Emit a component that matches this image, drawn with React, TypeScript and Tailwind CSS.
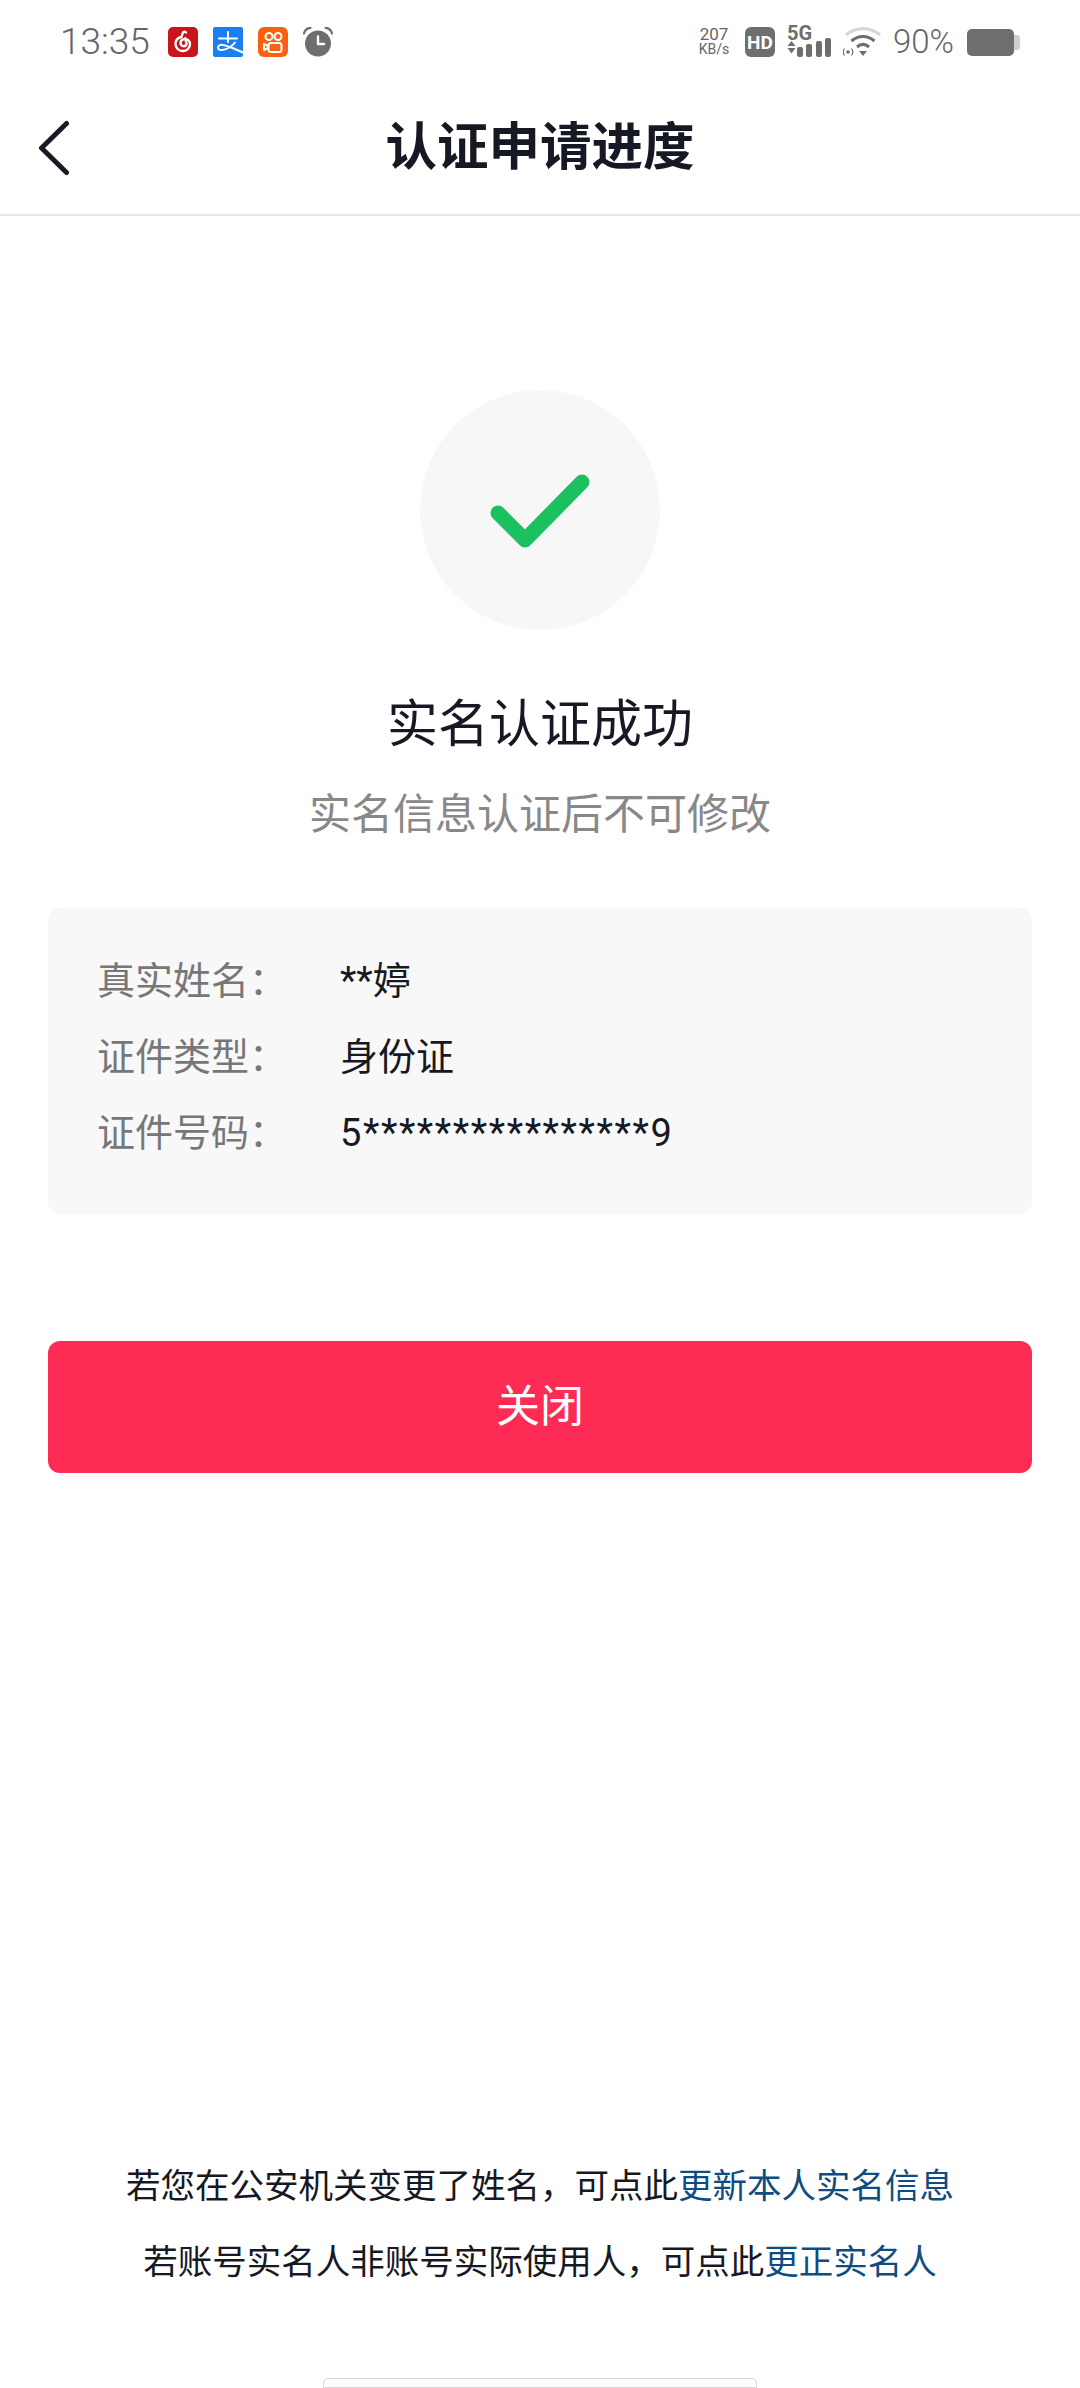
const font = "font-['Roboto','Noto_Sans_CJK_SC',sans-serif]";

function NeteaseIcon() {
    return (
        <svg width="30" height="30" viewBox="0 0 30 30" fill="none">
            <rect width="30" height="30" rx="5" fill="#c8141b" />
            <path d="M18 5.500c-1.200-1.300-3-.8-3.400.8L13.500 10c-3.800.8-6 3.600-6 7 0 4 3.200 7 7.200 7 4 0 7.300-3 7.300-6.800 0-3-2.400-5.200-5.200-5.200-2.500 0-4.300 1.800-4.300 4 0 1.800 1.400 3.200 3.100 3.200 1.700 0 2.900-1.300 2.900-3l-1.300-5" stroke="#fff" strokeWidth="2.400" strokeLinecap="round" strokeLinejoin="round" />
        </svg>
    );
}

function AlipayIcon() {
    return (
        <svg width="30" height="30" viewBox="0 0 30 30" fill="none">
            <rect width="30" height="30" rx="2" fill="#1a7ff0" />
            <path d="M6 11.500h18M15 5v10M22 15.500c-3 4-9 7.500-13 7.500-3 0-4-1.500-4-2.500 0-2 2.500-3 5-2.500 5 .7 12 4 20 7.500" stroke="#fff" strokeWidth="2" strokeLinecap="round" />
        </svg>
    );
}

function KuaishouIcon() {
    return (
        <svg width="30" height="30" viewBox="0 0 30 30" fill="none">
            <rect width="30" height="30" rx="6" fill="#f9600f" />
            <circle cx="11" cy="9.500" r="3.500" stroke="#fff" strokeWidth="2" />
            <circle cx="20" cy="9.500" r="3.500" stroke="#fff" strokeWidth="2" />
            <rect x="10.500" y="16" width="13" height="9" rx="2.500" stroke="#fff" strokeWidth="2" />
            <path d="M10 19l-4-2v6l4-2" stroke="#fff" strokeWidth="2" strokeLinejoin="round" />
        </svg>
    );
}

function AlarmIcon() {
    return (
        <svg width="30" height="30" viewBox="0 0 30 30" fill="none">
            <circle cx="15" cy="16.500" r="13" fill="#6e6e6e" />
            <path d="M1 6.500C2 2.500 5 1 7.500.8M29 6.500C28 2.500 25 1 22.500.8" stroke="#6e6e6e" strokeWidth="2.200" strokeLinecap="round" />
            <path d="M15 9.500v7.500h6" stroke="#fff" strokeWidth="2.400" strokeLinecap="round" strokeLinejoin="round" />
        </svg>
    );
}

function SignalIcon() {
    return (
        <svg width="46" height="30" viewBox="0 0 46 30" fill="#6e6e6e">
            <path d="M4.500 14l4 5h-8zM.5 21h8l-4 5.500z" />
            <rect x="10" y="20" width="6" height="10" rx="2" />
            <rect x="19" y="17" width="6" height="13" rx="2" />
            <rect x="29" y="14" width="6" height="16" rx="2" />
            <rect x="38" y="11" width="6" height="19" rx="2" />
        </svg>
    );
}

function WifiIcon() {
    return (
        <svg width="40" height="30" viewBox="0 0 40 30" fill="none">
            <path d="M3 8C13-.5 27-.5 37 8" stroke="#d6d6d6" strokeWidth="3.200" />
            <path d="M8.500 14c7-6 16-6 23 0" stroke="#6e6e6e" strokeWidth="3.200" />
            <path d="M14 20c4-3.500 8-3.500 12 0" stroke="#6e6e6e" strokeWidth="3.200" />
            <path d="M16 24h8l-4 5z" fill="#6e6e6e" />
            <circle cx="5" cy="25" r="1.800" fill="#6e6e6e" />
            <path d="M1.500 21.500c-1.500 2-1.500 5 0 7M8.500 21.500c1.500 2 1.500 5 0 7" stroke="#6e6e6e" strokeWidth="1.200" />
        </svg>
    );
}

function StatusBar() {
    return (
        <div className="flex h-[84px] items-start justify-between pt-[27px] pl-[60px] pr-[60px]">
            <div className="flex items-center">
                <span className="w-[108px] text-[37px] leading-[30px] font-light text-[#666]">13:35</span>
                <div className="flex gap-[15px]">
                    <NeteaseIcon />
                    <AlipayIcon />
                    <KuaishouIcon />
                    <AlarmIcon />
                </div>
            </div>
            <div className="flex items-center">
                <div className="flex w-[34px] flex-col items-center text-[#666]">
                    <span className="text-[17px] leading-[15px]">207</span>
                    <span className="text-[14px] leading-[15px]">KB/s</span>
                </div>
                <span className="ml-[14px] flex h-[30px] w-[30px] items-center justify-center rounded-[6px] bg-[#6e6e6e] text-[19px] leading-none font-bold text-white">HD</span>
                <div className="relative ml-[12px] h-[30px] w-[46px]">
                    <SignalIcon />
                    <span className="absolute top-[-3px] left-0 text-[20px] leading-[19px] font-bold text-[#6e6e6e]">5G</span>
                </div>
                <div className="ml-[10px]">
                    <WifiIcon />
                </div>
                <span className="ml-[10px] w-[64px] text-[33px] leading-[30px] font-light text-[#666]">90%</span>
                <div className="ml-[10px] flex h-[27px] items-center">
                    <div className="h-[27px] w-[47px] rounded-[5px] bg-[#6e6e6e]" />
                    <div className="h-[15px] w-[6px] rounded-r-[3px] bg-[#cfcfcf]" />
                </div>
            </div>
        </div>
    );
}

function NavBar() {
    return (
        <div className="flex h-[132px] items-center border-b-2 border-[#e8e8e8] pb-[2px]">
            <div className="w-[120px] pl-[38px]">
                <svg width="32" height="56" viewBox="0 0 32 56" fill="none">
                    <path d="M28.500 3.500L3.500 28l25 24.500" stroke="#1b1b26" strokeWidth="5" strokeLinecap="round" strokeLinejoin="round" />
                </svg>
            </div>
            <h1 className="flex-1 text-center text-[51.500px] leading-[60px] font-bold text-[#161823]">认证申请进度</h1>
            <div className="w-[120px]" />
        </div>
    );
}

function InfoRow({ label, value, valueClass }: { label: string; value: string; valueClass?: string }) {
    return (
        <div className="flex h-[76px] text-[38px] leading-[76px]">
            <span className="w-[243px] text-[#777]">{label}</span>
            <span className={`text-[#161823] ${valueClass ?? ""}`}>{value}</span>
        </div>
    );
}

export default function App() {
    return (
        <div className={`flex h-[2388px] flex-col overflow-hidden bg-white ${font}`}>
            <StatusBar />
            <NavBar />

            <div className="flex flex-col items-center">
                <div className="mt-[174px] flex h-[240px] w-[240px] items-center justify-center rounded-full bg-[#f7f7f7]">
                    <svg width="100" height="80" viewBox="0 0 100 80" fill="none">
                        <path d="M8 43l27 27 57-58" stroke="#1bc15e" strokeWidth="15" strokeLinecap="round" strokeLinejoin="round" />
                    </svg>
                </div>
                <h2 className="mt-[65px] text-[51px] leading-[60px] text-[#161823]">实名认证成功</h2>
                <p className="mt-[35px] text-[42px] leading-[50px] text-[#888]">实名信息认证后不可修改</p>
            </div>

            <div className="mx-[48px] mt-[68px] h-[306px] rounded-[12px] bg-[#f8f8f8] pt-[35px] pl-[49px]">
                <InfoRow label="真实姓名：" value="**婷" />
                <InfoRow label="证件类型：" value="身份证" />
                <InfoRow label="证件号码：" value="5****************9" valueClass="tracking-[1.600px]" />
            </div>

            <button className="mx-[48px] mt-[127px] h-[132px] rounded-[12px] bg-[#fe2c55] text-[44px] text-white">关闭</button>

            <div className="mt-auto flex flex-col items-center text-[34.500px] leading-[76px] text-[#161823]">
                <p>若您在公安机关变更了姓名，可点此<a className="text-[#0f4c81]">更新本人实名信息</a></p>
                <p>若账号实名人非账号实际使用人，可点此<a className="text-[#0f4c81]">更正实名人</a></p>
            </div>

            <div className="mx-auto mt-[78px] h-[10px] w-[434px] rounded-t-[5px] border border-[#d8d8d8] bg-white" />
        </div>
    );
}
